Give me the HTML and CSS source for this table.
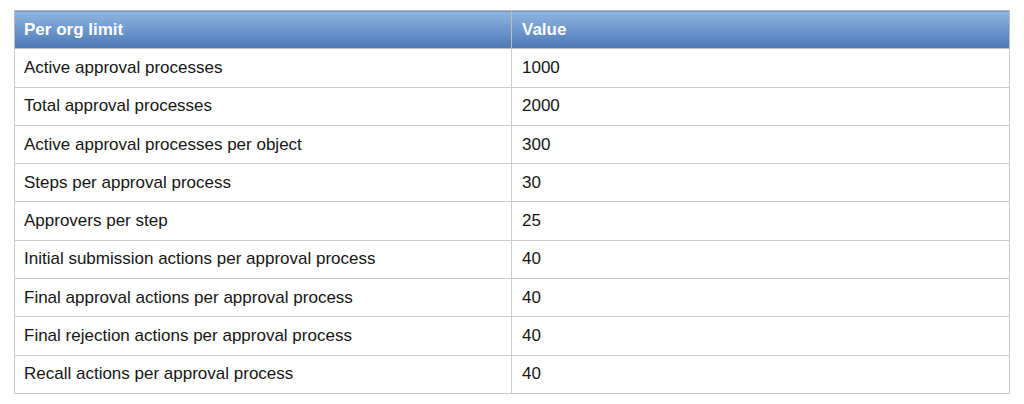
FILE: index.html
```html
<!DOCTYPE html>
<html>
<head>
<meta charset="utf-8">
<link rel="stylesheet" href="styles.css">
</head>
<body>
<table class="limits">
  <thead>
    <tr><th class="col-name">Per org limit</th><th>Value</th></tr>
  </thead>
  <tbody>
    <tr><td>Active approval processes</td><td>1000</td></tr>
    <tr><td>Total approval processes</td><td>2000</td></tr>
    <tr><td>Active approval processes per object</td><td>300</td></tr>
    <tr><td>Steps per approval process</td><td>30</td></tr>
    <tr><td>Approvers per step</td><td>25</td></tr>
    <tr><td>Initial submission actions per approval process</td><td>40</td></tr>
    <tr><td>Final approval actions per approval process</td><td>40</td></tr>
    <tr><td>Final rejection actions per approval process</td><td>40</td></tr>
    <tr><td>Recall actions per approval process</td><td>40</td></tr>
  </tbody>
</table>
</body>
</html>
```
FILE: styles.css
```css
html, body {
  margin: 0;
  padding: 0;
  background: #ffffff;
}
body {
  padding: 10px 15px 0 14px;
  font-family: "Liberation Sans", Arial, sans-serif;
}
.limits {
  width: 996px;
  border-collapse: collapse;
  table-layout: fixed;
  font-size: 17px;
  color: #161616;
}
.limits th, .limits td {
  border: 1px solid #cbcbcb;
  padding: 0 9px;
  text-align: left;
  height: 38.3px;
  box-sizing: border-box;
}
.limits th {
  border-color: #bdbdbd;
  color: #ffffff;
  font-weight: bold;
  background: linear-gradient(to bottom, #90b6df 0%, #6d97cd 50%, #4b77b3 100%);
}
.limits .col-name {
  width: 497px;
}
.limits td:last-child, .limits th:last-child {
  padding-left: 10px;
}
```
